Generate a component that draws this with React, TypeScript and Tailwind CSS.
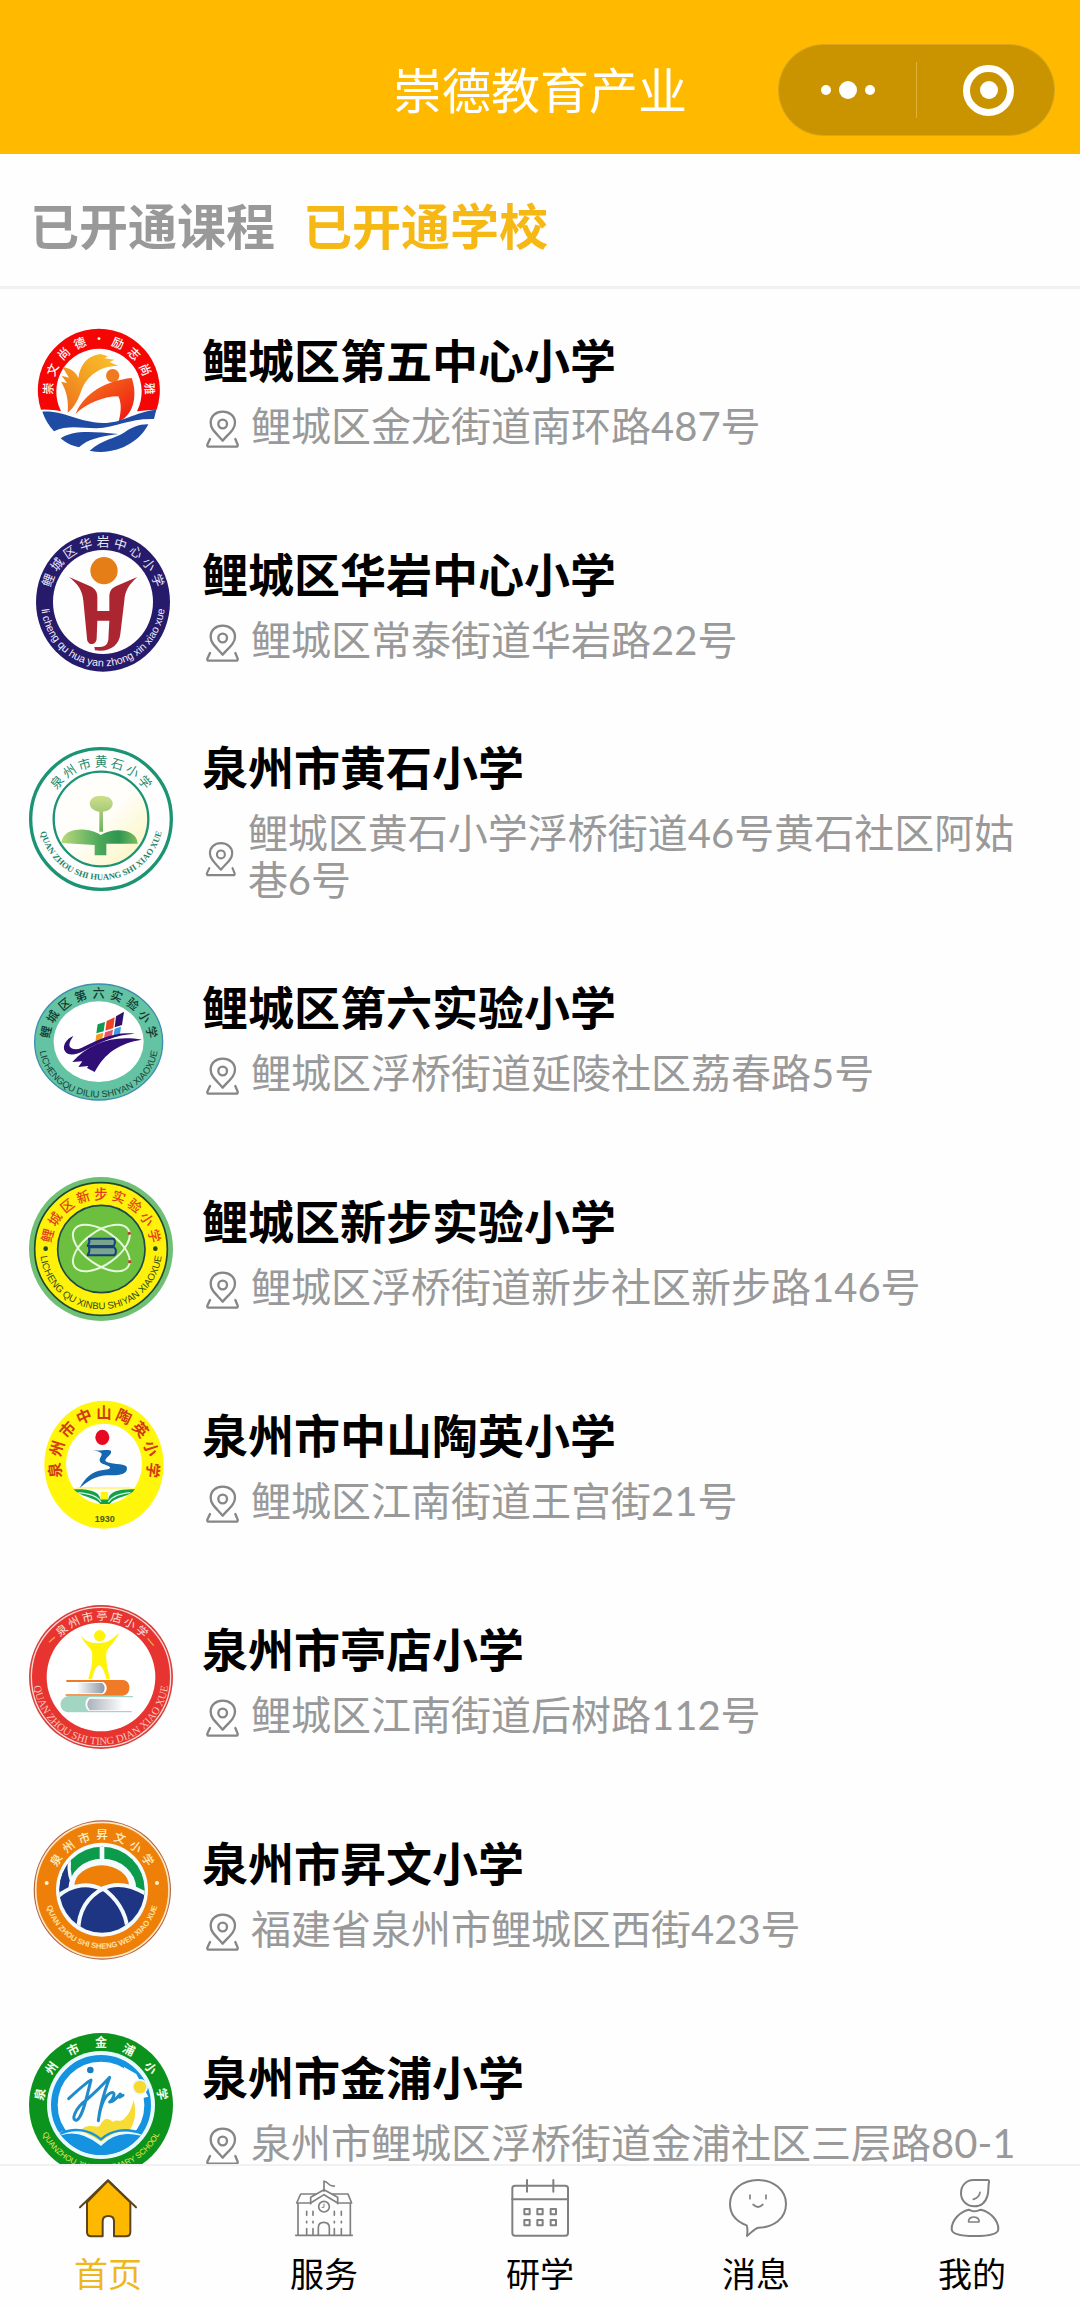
import { useState } from "react";
import type { ReactNode } from "react";

type ArcProps = {
  text: string;
  cx: number;
  cy: number;
  rx: number;
  ry: number;
  from: number;
  to: number;
  size: number;
  fill: string;
  weight?: number;
  font?: string;
};

const KAI = '"Noto Sans CJK SC", sans-serif';

/** Spreads characters evenly along the upper arc; angles are degrees from the top. */
function TopArc({ text, cx, cy, rx, ry, from, to, size, fill, weight = 500 }: ArcProps) {
  const chars = Array.from(text);
  return (
    <g fill={fill} fontSize={size} fontWeight={weight} fontFamily={KAI} textAnchor="middle">
      {chars.map((c, i) => {
        const a = from + ((to - from) * i) / (chars.length - 1);
        const r = (a * Math.PI) / 180;
        const x = cx + rx * Math.sin(r);
        const y = cy - ry * Math.cos(r);
        return (
          <text key={i} transform={`translate(${x} ${y}) rotate(${a})`} y={size * 0.37}>
            {c}
          </text>
        );
      })}
    </g>
  );
}

/** Runs Latin lettering along the lower half of a ring. */
function BottomArc({
  id,
  text,
  cx,
  cy,
  rx,
  ry,
  size,
  fill,
  weight = 400,
  font = '"Liberation Sans", sans-serif',
}: Omit<ArcProps, "from" | "to"> & { id: string }) {
  return (
    <g>
      <path id={id} fill="none" d={`M${cx - rx} ${cy - 40} V${cy} A${rx} ${ry} 0 0 0 ${cx + rx} ${cy} V${cy - 40}`} />
      <text fill={fill} fontSize={size} fontWeight={weight} fontFamily={font} textAnchor="middle">
        <textPath href={`#${id}`} startOffset="50%">
          {text}
        </textPath>
      </text>
    </g>
  );
}

function Emblem({ box, label, children }: { box: string; label: string; children: ReactNode }) {
  return (
    <svg viewBox={box} role="img" aria-label={label} className="my-[11px] size-36 shrink-0">
      {children}
    </svg>
  );
}

const emblemWuzhong = (
  <Emblem box="88 51 432 432" label="鲤城区第五中心小学校徽">
    <defs>
      <linearGradient id="wing" x1="0" y1="1" x2="1" y2="0">
        <stop offset="0" stopColor="#ee6a1c" />
        <stop offset=".5" stopColor="#f3a022" />
        <stop offset="1" stopColor="#fbc32c" />
      </linearGradient>
      <linearGradient id="body" x1="0" y1="0" x2="1" y2="1">
        <stop offset="0" stopColor="#f5821f" />
        <stop offset="1" stopColor="#f01010" />
      </linearGradient>
    </defs>
    <path fill="#f60505" d="M124 332 A183 184 0 1 1 471 332 Q445 333 412 337 A128 129 0 1 0 184 337 Q160 331 124 332Z" />
    <path
      fill="url(#wing)"
      d="M204 341 C207 305 201 275 184 248 L202 252 L186 230 L208 236 L189 205 C215 208 230 220 236 238 C240 200 262 170 302 165 L325 172 L314 178 L345 182 L330 189 L356 201 C300 200 262 232 246 272 C236 300 225 325 204 341Z"
    />
    <circle cx="339" cy="230" r="20" fill="#f07a22" />
    <path fill="url(#body)" d="M228 344 C255 280 320 245 396 237 C412 280 408 345 357 368 C366 335 365 310 356 292 C310 292 260 315 228 344Z" />
    <g fill="#1f4ba5">
      <path d="M128 338 C200 335 230 370 310 372 C370 372 400 340 470 332 L463 360 C390 358 350 385 290 388 C240 386 200 378 163 397 C148 380 135 360 128 338Z" />
      <path d="M183 418 C215 395 265 395 356 405 C300 412 262 422 238 445 C215 440 200 432 183 418Z" />
      <path d="M270 455 C310 420 345 420 375 400 C395 385 420 375 446 376 C420 430 345 472 270 455Z" />
    </g>
    <TopArc text="崇文尚德·励志尚雅" cx={298} cy={274} rx={152} ry={153} from={-88} to={88} size={36} fill="#fff" />
  </Emblem>
);

const emblemHuayan = (
  <Emblem box="88 693 432 432" label="鲤城区华岩中心小学校徽">
    <ellipse cx="310" cy="909" rx="201" ry="209" fill="#261a6b" />
    <ellipse cx="310" cy="909" rx="150" ry="156" fill="#fefefe" />
    <circle cx="313" cy="815" r="41" fill="#e67e17" />
    <path
      fill="#ab2630"
      d="M208 834 L272 862 C288 870 293 880 293 895 V936 H329 V895 C329 878 334 868 350 861 L413 834 C388 856 376 875 374 905 L362 1005 C358 1040 330 1060 286 1054 L284 1044 C312 1046 323 1040 326 1022 L329 965 H293 L291 1018 C291 1040 262 1042 262 1018 L251 905 C248 875 236 856 208 834Z"
    />
    <TopArc text="鲤城区华岩中心小学" cx={310} cy={909} rx={176} ry={182} from={-69} to={69} size={38} fill="#e9e6f6" weight={400} />
    <BottomArc id="arc2" text="li cheng qu hua yan zhong xin xiao xue" cx={310} cy={909} rx={186} ry={193} size={32} fill="#f1effa" />
  </Emblem>
);

const emblemHuangshi = (
  <Emblem box="88 84 432 432" label="泉州市黄石小学校徽">
    <defs>
      <linearGradient id="sprout" x1="0" y1="0" x2="1" y2="0">
        <stop offset="0" stopColor="#bcd97c" />
        <stop offset=".5" stopColor="#4ba85a" />
        <stop offset=".75" stopColor="#2f9550" />
        <stop offset="1" stopColor="#7fbd5d" />
      </linearGradient>
      <linearGradient id="stem" x1="0" y1="0" x2="0" y2="1">
        <stop offset="0" stopColor="#cfdf8b" />
        <stop offset="1" stopColor="#6db062" />
      </linearGradient>
      <linearGradient id="glow" x1="0" y1="0" x2="1" y2="1">
        <stop offset=".5" stopColor="#fffefb" />
        <stop offset="1" stopColor="#fbf3b4" />
      </linearGradient>
    </defs>
    <circle cx="304" cy="300" r="211" fill="#fefefe" stroke="#1c9474" strokeWidth="10" />
    <circle cx="304" cy="300" r="142" fill="url(#glow)" stroke="#1c9474" strokeWidth="7" />
    <path fill="url(#stem)" d="M304 230 C350 230 350 274 310 278 V338 H299 V278 C260 272 260 230 304 230Z" />
    <path fill="url(#sprout)" d="M185 372 C190 320 270 325 303 348 C340 325 412 328 414 374 H320 V409 H285 V378Z" />
    <TopArc text="泉州市黄石小学" cx={304} cy={300} rx={172} ry={172} from={-50} to={50} size={38} fill="#25896d" weight={400} />
    <BottomArc id="arc3" text="QUAN ZHOU SHI HUANG SHI XIAO XUE" cx={304} cy={300} rx={186} ry={183} size={26} weight={700} fill="#1f8468" font='"Liberation Serif", serif' />
  </Emblem>
);

const emblemDiliu = (
  <Emblem box="88 735 432 432" label="鲤城区第六实验小学校徽">
    <ellipse cx="297" cy="972" rx="192" ry="174" fill="#63c3a2" stroke="#3c8fae" strokeWidth="4" />
    <ellipse cx="297" cy="971" rx="135" ry="121" fill="#fff" />
    <path fill="#109a52" d="M294 919 L316 912 L312 940 L290 946Z" />
    <path fill="#ee4423" d="M321 909 L345 898 L341 930 L317 938Z" />
    <path fill="#30106f" d="M349 895 L373 881 L367 921 L345 928Z" />
    <path fill="#f49a25" d="M290 950 L311 944 L307 968 L287 971Z" />
    <path fill="#e35173" d="M316 943 L340 935 L336 960 L312 966Z" />
    <path fill="#3c9ddd" d="M345 932 L364 926 L361 948 L341 955Z" />
    <path fill="#2f0f75" d="M221 954 C200 962 186 985 196 1000 C205 1015 232 1010 250 1000 C300 972 350 950 405 947 C340 940 290 968 245 990 C225 998 205 992 210 975 C213 965 218 960 221 954Z" />
    <path fill="#2f0f75" d="M218 1032 C270 975 340 950 427 965 C360 975 315 1005 285 1062 L262 1050 L266 1044 L236 1047 L248 1030Z" />
    <TopArc text="鲤城区第六实验小学" cx={297} cy={972} rx={162} ry={146} from={-78} to={78} size={36} fill="#12372f" weight={500} />
    <BottomArc id="arc4" text="LICHENGQU DILIU SHIYAN XIAOXUE" cx={297} cy={980} rx={178} ry={158} size={28} fill="#174439" />
  </Emblem>
);

const emblemXinbu = (
  <Emblem box="88 117 432 432" label="鲤城区新步实验小学校徽">
    <circle cx="304" cy="333" r="216" fill="#6fbf74" />
    <circle cx="304" cy="333" r="199" fill="#fff10a" stroke="#1f4a2c" strokeWidth="5" />
    <circle cx="305" cy="333" r="131" fill="#6dc03f" stroke="#1f4a4a" strokeWidth="5" />
    <g fill="none" stroke="#e6f7dc">
      <ellipse cx="305" cy="330" rx="98" ry="50" strokeWidth="6" transform="rotate(35 305 330)" />
      <ellipse cx="305" cy="330" rx="98" ry="50" strokeWidth="6" transform="rotate(-35 305 330)" />
    </g>
    <circle cx="389" cy="286" r="5" fill="#b6442a" />
    <circle cx="390" cy="371" r="5" fill="#b6442a" />
    <g fill="#79a58f" stroke="#173f7a" strokeWidth="6" strokeLinejoin="round">
      <path d="M268 302 H342 Q350 313 342 324 H264 Q272 313 268 302Z" />
      <path d="M268 328 H344 Q354 340 344 352 H264 Q272 340 268 328Z" />
    </g>
    <circle cx="138" cy="332" r="7" fill="#234a23" />
    <circle cx="467" cy="332" r="7" fill="#234a23" />
    <TopArc text="鲤城区新步实验小学" cx={304} cy={333} rx={165} ry={165} from={-76} to={76} size={40} fill="#e0401a" weight={500} />
    <BottomArc id="arc5" text="LICHENG QU XINBU SHIYAN XIAOXUE" cx={304} cy={333} rx={183} ry={181} size={29} fill="#2d4a1c" />
  </Emblem>
);

const emblemTaoying = (
  <Emblem box="88 757 432 432" label="泉州市中山陶英小学校徽">
    <ellipse cx="313" cy="978" rx="179" ry="192" fill="#fff60a" />
    <ellipse cx="313" cy="976" rx="114" ry="121" fill="#fefefe" />
    <path fill="#fff36a" d="M222 1050 H406 L390 1046 H236Z" />
    <ellipse cx="308" cy="896" rx="21" ry="23" fill="#e60b20" />
    <path
      fill="#1667b1"
      d="M279 934 C300 938 325 930 334 936 C338 950 312 958 318 968 C330 978 372 974 381 984 C388 1010 350 1010 320 1010 C285 1012 262 1030 240 1048 C255 1020 275 998 310 994 C325 992 335 990 330 984 C315 976 298 976 300 962 C305 948 318 942 279 934Z"
    />
    <path fill="#12a046" d="M222 1052 C262 1050 300 1056 302 1082 L326 1082 C328 1058 362 1050 406 1052 C392 1075 350 1072 330 1096 H302 C285 1075 240 1075 222 1052Z" />
    <path fill="none" stroke="#d6f0e4" strokeWidth="4" d="M236 1062 C270 1066 292 1070 304 1090 M392 1062 C360 1066 340 1070 326 1090" />
    <path fill="#fff60a" d="M303 1060 H325 V1082 H303Z" />
    <TopArc text="泉州市中山陶英小学" cx={313} cy={978} rx={148} ry={158} from={-96} to={96} size={46} fill="#d33a12" weight={700} />
    <text x="315" y="1150" fontSize="27" fontWeight="700" textAnchor="middle" fill="#4a5a1a" fontFamily='"Liberation Sans", sans-serif'>
      1930
    </text>
  </Emblem>
);

const emblemTingdian = (
  <Emblem box="88 78 432 432" label="泉州市亭店小学校徽">
    <defs>
      <linearGradient id="pages" x1="0" y1="0" x2="1" y2="0">
        <stop offset="0" stopColor="#fff" />
        <stop offset="1" stopColor="#8d97a5" />
      </linearGradient>
    </defs>
    <circle cx="304" cy="294" r="216" fill="#d8403c" />
    <circle cx="304" cy="294" r="209" fill="#e73430" stroke="#fbd9d4" strokeWidth="4" />
    <circle cx="304" cy="294" r="163" fill="#fff" />
    <g fill="#fff30a">
      <ellipse cx="300" cy="170" rx="17" ry="17" />
      <path d="M243 168 C262 192 275 192 299 192 C325 192 338 182 359 160 C345 195 322 205 320 222 C318 255 326 275 331 300 H320 C315 280 308 262 298 258 C288 262 282 280 277 300 H266 C272 275 280 255 277 222 C275 205 252 195 243 168Z" />
    </g>
    <path fill="#f07a26" d="M200 303 H370 C396 305 396 347 370 350 H198 V346 H310 C325 340 325 315 310 309 H200Z" />
    <path fill="url(#pages)" d="M230 312 H308 Q322 328 308 343 H230Z" />
    <path fill="#a3d6c2" d="M400 351 H206 C176 355 174 396 206 400 H396 V396 H268 C254 388 254 362 268 355 H400Z" />
    <path fill="url(#pages)" d="M262 358 H364 Q378 376 364 393 H262Z" transform="rotate(180 317 376)" opacity=".75" />
    <g stroke="#f7a34a" strokeWidth="4">
      <path d="M148 190 L166 174 M444 178 L462 200" />
    </g>
    <TopArc text="泉州市亭店小学" cx={304} cy={294} rx={184} ry={184} from={-40} to={42} size={34} fill="#fde3dc" weight={400} />
    <BottomArc id="arc7" text="QUAN ZHOU SHI TING DIAN XIAO XUE" cx={304} cy={294} rx={203} ry={203} size={32} fill="#fbc4b8" font='"Liberation Serif", serif' />
  </Emblem>
);

const emblemShengwen = (
  <Emblem box="88 719 432 432" label="泉州市昇文小学校徽">
    <clipPath id="globe">
      <ellipse cx="307" cy="931" rx="128" ry="129" />
    </clipPath>
    <ellipse cx="308" cy="932" rx="206" ry="209" fill="#b3623f" />
    <ellipse cx="308" cy="932" rx="200" ry="203" fill="#ee8009" stroke="#fde7c4" strokeWidth="5" />
    <ellipse cx="307" cy="931" rx="138" ry="141" fill="#f3fbff" />
    <g clipPath="url(#globe)">
      <rect x="170" y="795" width="280" height="150" fill="#0c9a4b" />
      <path fill="#1e3584" d="M170 940 V840 L207 855 C205 890 212 905 222 922Z" />
      <path fill="none" stroke="#f3fbff" strokeWidth="10" d="M209 845 C206 880 212 905 226 925" />
      <ellipse cx="308" cy="930" rx="102" ry="92" fill="#f3fbff" />
      <ellipse cx="306" cy="920" rx="82" ry="62" fill="#ee8009" />
      <path stroke="#f3fbff" strokeWidth="14" d="M307 795 V845" />
      <path fill="#1e3584" stroke="#f3fbff" strokeWidth="12" d="M170 955 C220 910 270 912 306 930 C345 908 395 915 450 950 V1090 H170Z" />
      <path fill="none" stroke="#f3fbff" strokeWidth="12" d="M236 1055 C236 990 265 950 315 925 M306 925 C350 955 380 1000 383 1050" />
    </g>
    <circle cx="141" cy="911" r="6" fill="#fff2c8" />
    <circle cx="472" cy="911" r="6" fill="#fff2c8" />
    <TopArc text="泉州市昇文小学" cx={307} cy={931} rx={164} ry={164} from={-57} to={57} size={35} fill="#fff0c4" weight={500} />
    <BottomArc id="arc8" text="QUAN ZHOU SHI SHENG WEN XIAO XUE" cx={307} cy={934} rx={172} ry={174} size={23} weight={700} fill="#ffe2a0" />
  </Emblem>
);

const emblemJinpu = (
  <Emblem box="88 99 432 432" label="泉州市金浦小学校徽">
    <clipPath id="pond">
      <circle cx="304" cy="315" r="150" />
    </clipPath>
    <circle cx="304" cy="315" r="216" fill="#0c931d" />
    <circle cx="304" cy="315" r="162" fill="#e9faff" />
    <circle cx="304" cy="315" r="140" fill="#fff" stroke="#1593e0" strokeWidth="20" />
    <path fill="#fff" d="M372 200 L410 222 L446 290 L405 300Z" />
    <path fill="#f6dc35" d="M250 384 C275 370 285 385 300 378 C315 350 325 355 340 366 C350 355 362 368 372 358 C392 340 396 320 402 300 C412 340 405 375 385 395 L304 425 L245 392Z" />
    <g clipPath="url(#pond)">
      <path fill="#1593e0" stroke="#e9faff" strokeWidth="9" d="M140 425 C190 385 245 385 304 432 C345 390 410 385 470 425 V490 H140Z" />
      <path fill="none" stroke="#1593e0" strokeWidth="7" d="M180 402 C225 380 270 390 304 418 C335 390 380 382 430 402" />
    </g>
    <circle cx="421" cy="261" r="24" fill="#e9faff" />
    <circle cx="421" cy="261" r="19" fill="#f8d92d" />
    <circle cx="272" cy="210" r="10" fill="#177fc0" />
    <path
      fill="none"
      stroke="#1f8bcb"
      strokeWidth="9"
      strokeLinecap="round"
      strokeLinejoin="round"
      d="M207 296 C235 270 265 245 274 240 C262 285 250 350 232 360 C212 365 225 325 260 300 C290 275 318 245 330 232 C318 265 300 320 296 362 C302 320 315 285 335 278 C352 275 338 300 330 306 C345 305 358 285 362 282 L360 292 L370 286"
    />
    <TopArc text="泉州市金浦小学" cx={304} cy={315} rx={186} ry={186} from={-80} to={80} size={36} fill="#f4ffe9" weight={700} />
    <BottomArc id="arc9" text="QUANZHOU JINPU PRIMARY SCHOOL" cx={304} cy={315} rx={196} ry={196} size={24} fill="#e4e94a" />
  </Emblem>
);

type School = { name: string; address: string; emblem: ReactNode };

const schools: School[] = [
  { name: "鲤城区第五中心小学", address: "鲤城区金龙街道南环路487号", emblem: emblemWuzhong },
  { name: "鲤城区华岩中心小学", address: "鲤城区常泰街道华岩路22号", emblem: emblemHuayan },
  { name: "泉州市黄石小学", address: "鲤城区黄石小学浮桥街道46号黄石社区阿姑巷6号", emblem: emblemHuangshi },
  { name: "鲤城区第六实验小学", address: "鲤城区浮桥街道延陵社区荔春路5号", emblem: emblemDiliu },
  { name: "鲤城区新步实验小学", address: "鲤城区浮桥街道新步社区新步路146号", emblem: emblemXinbu },
  { name: "泉州市中山陶英小学", address: "鲤城区江南街道王宫街21号", emblem: emblemTaoying },
  { name: "泉州市亭店小学", address: "鲤城区江南街道后树路112号", emblem: emblemTingdian },
  { name: "泉州市昇文小学", address: "福建省泉州市鲤城区西街423号", emblem: emblemShengwen },
  { name: "泉州市金浦小学", address: "泉州市鲤城区浮桥街道金浦社区三层路80-1", emblem: emblemJinpu },
];

function PinIcon() {
  return (
    <svg viewBox="609 330 111 114" className="mt-1 h-[38px] w-[37px] min-w-0 shrink" fill="none" stroke="#868686" strokeWidth="7" strokeLinecap="round" strokeLinejoin="round" aria-hidden="true">
      <path d="M671 422 C652 400 635 388 635 368 C635 348 651 335 671 335 C691 335 708 348 708 368 C708 388 690 400 671 422Z" />
      <circle cx="671" cy="372" r="13" />
      <path d="M633 417 L625 434 Q624 440 630 440 H711 Q717 440 716 434 L709 417" />
    </svg>
  );
}

const iconClass = "size-[60px]";
const lineProps = { fill: "none", stroke: "#808080", strokeWidth: 6, strokeLinecap: "round", strokeLinejoin: "round" } as const;

const homeIcon = (
  <svg viewBox="234 534 180 180" className={iconClass} aria-hidden="true">
    <path fill="#ffb800" stroke="#5a451c" strokeWidth="6" strokeLinejoin="round" d="M324 542 L391 607 V696 Q391 709 378 709 H342 V664 Q342 648 325 648 Q308 648 308 664 V709 H274 Q261 709 261 696 V607Z" />
    <path fill="none" stroke="#5a451c" strokeWidth="6" strokeLinecap="round" strokeLinejoin="round" d="M240 622 L324 541 L408 622" />
  </svg>
);

const schoolIcon = (
  <svg viewBox="884 534 180 180" className={iconClass} aria-hidden="true" {...lineProps} strokeWidth={5}>
    <path d="M974 543 V574 M976 545 C985 543 986 560 1005 558" />
    <path d="M934 611 V592 L974 569 L1015 592 V611" />
    <path d="M950 582 H904 L892 609 H934 L974 584 L1015 609 H1057 L1046 582 H999" />
    <path d="M896 611 V704 M1053 611 V704 M889 706 H1059" />
    <circle cx="974" cy="620" r="16" />
    <path d="M974 612 V622 H968" strokeWidth="3" />
    <path d="M957 704 V683 Q957 667 973 667 Q990 667 990 683 V704 M941 634 V646 M922 634 V646 M1005 634 V646 M1026 634 V646 M941 664 V668 M922 664 V668 M1005 664 V668 M1026 664 V668 M941 686 V704 M922 686 V704 M1005 686 V704 M1026 686 V704" />
  </svg>
);

const calendarIcon = (
  <svg viewBox="64 54 180 180" className={iconClass} aria-hidden="true" {...lineProps}>
    <rect x="71" y="77" width="167" height="150" rx="8" />
    <path d="M71 118 H238 M115 60 V95 M194 60 V95" />
    {[115, 154, 194].map((x) => (
      <g key={x}>
        <rect x={x - 8} y="147" width="16" height="16" />
        <rect x={x - 8} y="180" width="16" height="16" />
      </g>
    ))}
  </svg>
);

const messageIcon = (
  <svg viewBox="708 54 180 180" className={iconClass} aria-hidden="true" overflow="visible" {...lineProps}>
    <path d="M770 196 C738 184 720 162 720 132 C720 90 757 60 804 60 C851 60 888 90 888 132 C888 176 850 203 805 203 C792 206 784 218 771 228 C773 216 773 206 770 196Z" />
    <path d="M780 105 V116 M828 105 V116" strokeWidth="5" />
    <path d="M790 134 Q804 148 818 134" />
  </svg>
);

const personIcon = (
  <svg viewBox="66 54 180 180" className={iconClass} aria-hidden="true" {...lineProps}>
    <path d="M160 60 H203 Q208 60 207 66 C204 82 206 95 203 105 C198 124 185 139 163 139 C140 139 123 122 123 99 C123 76 140 60 160 60Z" />
    <path d="M180 97 Q178 113 160 118" strokeWidth="5" />
    <path d="M146 149 C152 150 153 154 163 154 C174 154 176 150 183 149 C210 155 235 180 235 207 C235 223 200 228 164 228 C128 228 95 223 95 207 C95 180 120 155 146 149Z" />
    <path d="M146 186 V180 Q150 171 161 171 Q173 171 177 180 V186Z" strokeWidth="5" />
  </svg>
);

const navItems = [
  { label: "首页", icon: homeIcon, color: "text-[#eeb71f]" },
  { label: "服务", icon: schoolIcon, color: "text-black" },
  { label: "研学", icon: calendarIcon, color: "text-black" },
  { label: "消息", icon: messageIcon, color: "text-black" },
  { label: "我的", icon: personIcon, color: "text-black" },
];

export default function App() {
  const tabs = ["已开通课程", "已开通学校"];
  const [active, setActive] = useState(tabs[1]);

  return (
    <div className="flex h-screen flex-col bg-[#fefefe] font-['Noto_Sans_CJK_SC',sans-serif] text-black">
      <header className="relative flex shrink-0 justify-center bg-[#ffba00] pt-[53px] pb-[31px]">
        <h1 className="text-[49px] leading-[70px] text-white">崇德教育产业</h1>
        <div className="absolute top-[45px] right-[26px] flex h-[90px] w-[275px] items-center rounded-full bg-[#ca9400] ring-1 ring-[#d9a51c]">
          <button type="button" aria-label="更多" className="flex flex-1 items-center justify-center gap-2">
            <span className="size-[10px] rounded-full bg-white" />
            <span className="size-[18px] rounded-full bg-white" />
            <span className="size-[10px] rounded-full bg-white" />
          </button>
          <span className="h-14 w-px bg-[#dfb13a]" />
          <button type="button" aria-label="关闭" className="flex flex-1 items-center justify-center">
            <span className="ml-1.5 flex size-[51px] items-center justify-center rounded-full border-[7px] border-white">
              <span className="size-[18px] rounded-full bg-white" />
            </span>
          </button>
        </div>
      </header>

      <div role="tablist" className="flex shrink-0 gap-7 border-b-[3px] border-[#f1f1f1] px-[30px] pt-[34px] pb-[26px]">
        {tabs.map((tab) => (
          <button
            key={tab}
            type="button"
            role="tab"
            aria-selected={tab === active}
            onClick={() => setActive(tab)}
            className={
              tab === active
                ? "text-[49px] leading-[72px] font-bold text-[#f5b814]"
                : "text-[49px] leading-[72px] font-bold text-[#999999]"
            }
          >
            {tab}
          </button>
        ))}
      </div>

      <main className="min-h-0 flex-1 overflow-y-auto [scrollbar-width:none]">
        <ul className="-mt-2">
          {schools.map((school) => (
            <li key={school.name}>
              <a href="#school" className="flex items-center gap-[29px] py-6 pr-9 pl-[29px]">
                {school.emblem}
                <div className="flex min-w-0 flex-1 flex-col gap-3">
                  <h2 className="text-[46px] leading-[65px] font-bold">{school.name}</h2>
                  <div className="flex items-center gap-3">
                    <PinIcon />
                    <p className="font-[Lato,'Noto_Sans_CJK_SC',sans-serif] text-[40px] leading-[47px] text-[#999999]">{school.address}</p>
                  </div>
                </div>
              </a>
            </li>
          ))}
        </ul>
      </main>

      <nav className="grid shrink-0 grid-cols-5 border-t-2 border-[#f1f1f1] bg-[#fefefe] pt-3 pb-[10px]">
        {navItems.map((item) => (
          <a key={item.label} href="#nav" className="flex flex-col items-center gap-[10px]">
            {item.icon}
            <span className={`text-[34px] leading-[49px] ${item.color}`}>{item.label}</span>
          </a>
        ))}
      </nav>
    </div>
  );
}
